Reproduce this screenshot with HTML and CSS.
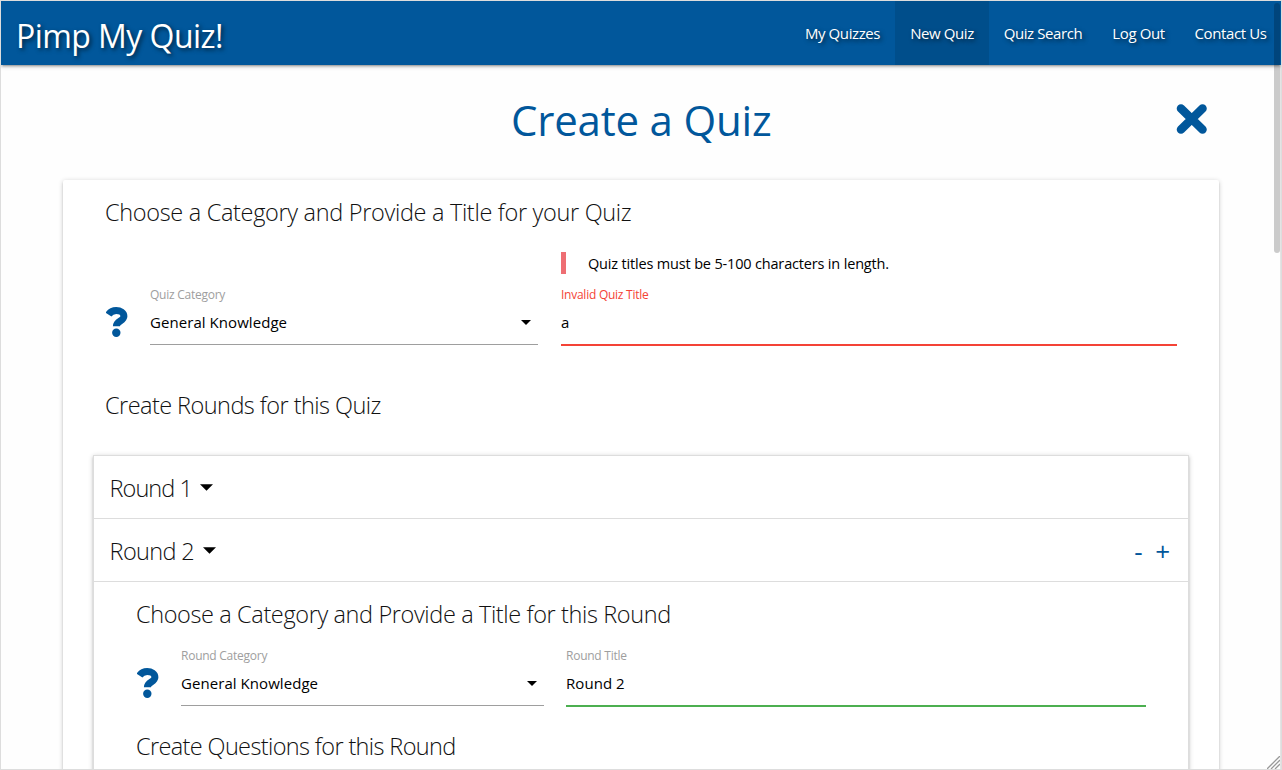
FILE: index.html
```html
<!DOCTYPE html>
<html lang="en">
<head>
<meta charset="utf-8">
<title>Pimp My Quiz!</title>
<link rel="stylesheet" href="styles.css">
</head>
<body>
<svg class="defs" width="0" height="0">
  <symbol id="question" viewBox="0 0 22 30"><path d="M2.500 7.600C4.500 4.600 6.800 3.500 10.200 3.500C14.400 3.500 17.900 5.800 17.900 9.300C17.900 14.300 10.400 13.800 10.400 19.200" fill="none" stroke="currentColor" stroke-width="7"/><circle cx="10.300" cy="25.800" r="4.200" fill="currentColor"/></symbol>
  <symbol id="caret" viewBox="0 0 10 5"><path d="M0 0H10L5 5Z" fill="currentColor"/></symbol>
</svg>
<div class="frame">
  <nav class="nav">
    <a class="logo"><span>Pimp My Quiz!</span></a>
    <ul class="links">
      <li class="l1">My Quizzes</li>
      <li class="l2 active">New Quiz</li>
      <li class="l3">Quiz Search</li>
      <li class="l4">Log Out</li>
      <li class="l5">Contact Us</li>
    </ul>
  </nav>
  <header class="page-head">
    <h1>Create a Quiz</h1>
    <svg class="close" viewBox="0 0 32 32"><path d="M5 5.500L26.500 26.500M26.500 5.500L5 26.500" stroke="currentColor" stroke-width="8.600" stroke-linecap="round"/></svg>
  </header>
  <main class="card">
    <h2 class="h-choose">Choose a Category and Provide a Title for your Quiz</h2>
    <div class="row quiz-row">
      <svg class="q"><use href="#question"/></svg>
      <div class="field select">
        <label>Quiz Category</label>
        <div class="value"><span>General Knowledge</span><svg class="arrow"><use href="#caret"/></svg></div>
      </div>
      <div class="field title">
        <p class="message"><span>Quiz titles must be 5-100 characters in length.</span></p>
        <label class="bad">Invalid Quiz Title</label>
        <div class="value invalid"><span>a</span></div>
      </div>
    </div>
    <h2 class="h-rounds">Create Rounds for this Quiz</h2>
    <section class="rounds">
      <div class="round-head first"><h2>Round 1</h2><svg class="caret"><use href="#caret"/></svg></div>
      <div class="round-head"><h2>Round 2</h2><svg class="caret"><use href="#caret"/></svg>
        <div class="tools"><span class="minus">-</span><span class="plus">+</span></div>
      </div>
      <div class="round-body">
        <h2 class="h-round">Choose a Category and Provide a Title for this Round</h2>
        <div class="row round-row">
          <svg class="q"><use href="#question"/></svg>
          <div class="field select">
            <label class="rc">Round Category</label>
            <div class="value"><span>General Knowledge</span><svg class="arrow"><use href="#caret"/></svg></div>
          </div>
          <div class="field title">
            <label>Round Title</label>
            <div class="value valid"><span>Round 2</span></div>
          </div>
        </div>
        <h2 class="h-questions">Create Questions for this Round</h2>
      </div>
    </section>
  </main>
  <div class="scrollbar"></div>
  <svg class="grip" viewBox="0 0 13 13"><path d="M0 13L13 0M4 13L13 4M8 13L13 8" stroke="#999" stroke-width="1.300"/></svg>
</div>
</body>
</html>
```
FILE: styles.css
```css
* { box-sizing: border-box; margin: 0; padding: 0; }
body { height: 770px; overflow: hidden; font-family: "Open Sans", "Noto Sans", sans-serif; color: #000; background: #fff; }
.defs { display: block; }
.frame { position: relative; width: 1282px; height: 770px; border: 1px solid #ddd; overflow: hidden; background: #fefefe; box-shadow: inset -1px 0 #e4e4e4; }
.nav { position: relative; display: flex; justify-content: space-between; height: 64px; background: #01579b; color: #fff; box-shadow: 0 2px 2px rgba(0,0,0,.14), 0 3px 1px -2px rgba(0,0,0,.12), 0 1px 5px rgba(0,0,0,.2); text-shadow: 2px 2px 4px rgba(0,0,0,.6); }
.logo { padding-left: 15px; font-size: 32px; line-height: 69px; letter-spacing: -.55px; white-space: nowrap; }
.links { display: flex; list-style: none; font-size: 15px; line-height: 64px; text-align: center; white-space: nowrap; letter-spacing: -.4px; }
.l1 { width: 105px; } .l2 { width: 94px; } .l3 { width: 108px; } .l4 { width: 83px; } .l5 { width: 101px; }
.active { background: rgba(0,0,0,.1); }
.page-head { display: flex; height: 115px; padding: 28px 73px 0 510px; justify-content: space-between; color: #01579b; }
h1 { font-size: 42px; line-height: 53px; font-weight: 400; letter-spacing: -.2px; white-space: nowrap; }
.close { width: 32px; height: 32px; margin-top: 10px; }
.card { width: 1156px; height: 700px; margin-left: 62px; padding: 16px 30px 0; border-radius: 2px; background: #fff; box-shadow: 0 2px 2px rgba(0,0,0,.14), 0 3px 1px -2px rgba(0,0,0,.12), 0 1px 5px rgba(0,0,0,.2); }
h2 { font-size: 23.5px; line-height: 32px; font-weight: 300; letter-spacing: -.65px; white-space: nowrap; color: #111; }
.h-choose, .h-rounds { padding-left: 12px; }
.h-choose { letter-spacing: -.32px; }
.h-rounds { letter-spacing: -.55px; }
.h-round { letter-spacing: -.38px; }
.h-questions { letter-spacing: -.63px; }
.first h2 { letter-spacing: -.95px; }
.row { display: flex; align-items: flex-end; }
.quiz-row { height: 118px; padding-left: 13px; }
.q { width: 22px; height: 30px; color: #01579b; margin-bottom: 9px; }
.field { display: flex; flex-direction: column; }
.quiz-row .select { width: 388px; margin-left: 22px; }
.quiz-row .title { width: 616px; margin-left: 23px; }
.message { height: 22px; margin-bottom: 13px; border-left: 5px solid #ee6e73; padding-left: 22px; font-size: 14.5px; line-height: 23px; letter-spacing: -.17px; white-space: nowrap; }
label { font-size: 12px; line-height: 16px; letter-spacing: -.25px; color: #9e9e9e; }
.bad { color: #f44336; }
.value { display: flex; justify-content: space-between; height: 42px; font-size: 15px; line-height: 39px; letter-spacing: .06px; border-bottom: 1px solid #9e9e9e; margin-bottom: 1px; }
.value.invalid, .value.valid { height: 43px; border-bottom: 2px solid #f44336; margin-bottom: 0; }
.value.valid { border-color: #4caf50; }
.arrow { width: 10px; height: 5px; margin: 17px 7px 0 0; }
.h-rounds { margin-top: 43px; }
.rounds { height: 330px; margin-top: 34px; border: 1px solid #ddd; box-shadow: 0 2px 2px rgba(0,0,0,.14), 0 3px 1px -2px rgba(0,0,0,.12), 0 1px 5px rgba(0,0,0,.2); }
.round-head { display: flex; height: 63px; padding: 16px 18px 0 15.6px; border-bottom: 1px solid #ddd; }
.caret { width: 13px; height: 7px; margin: 12px 0 0 9px; }
.first .caret { margin-left: 8px; }
.tools { display: flex; margin-left: auto; color: #01579b; font-size: 26px; line-height: 33px; }
.minus { width: 21px; }
.round-body { padding: 16px 42px 0; }
.round-row { height: 77px; padding-left: 1px; }
.round-row .select { width: 363px; margin-left: 22px; }
.round-row .title { width: 580px; margin-left: 22px; }
.h-questions { margin-top: 23px; }
.scrollbar { position: absolute; top: 2px; right: 1px; width: 6px; height: 250px; border-radius: 3px; background: rgba(0,0,0,.2); }
.grip { position: absolute; right: 1px; bottom: 0; width: 13px; height: 13px; }
```
